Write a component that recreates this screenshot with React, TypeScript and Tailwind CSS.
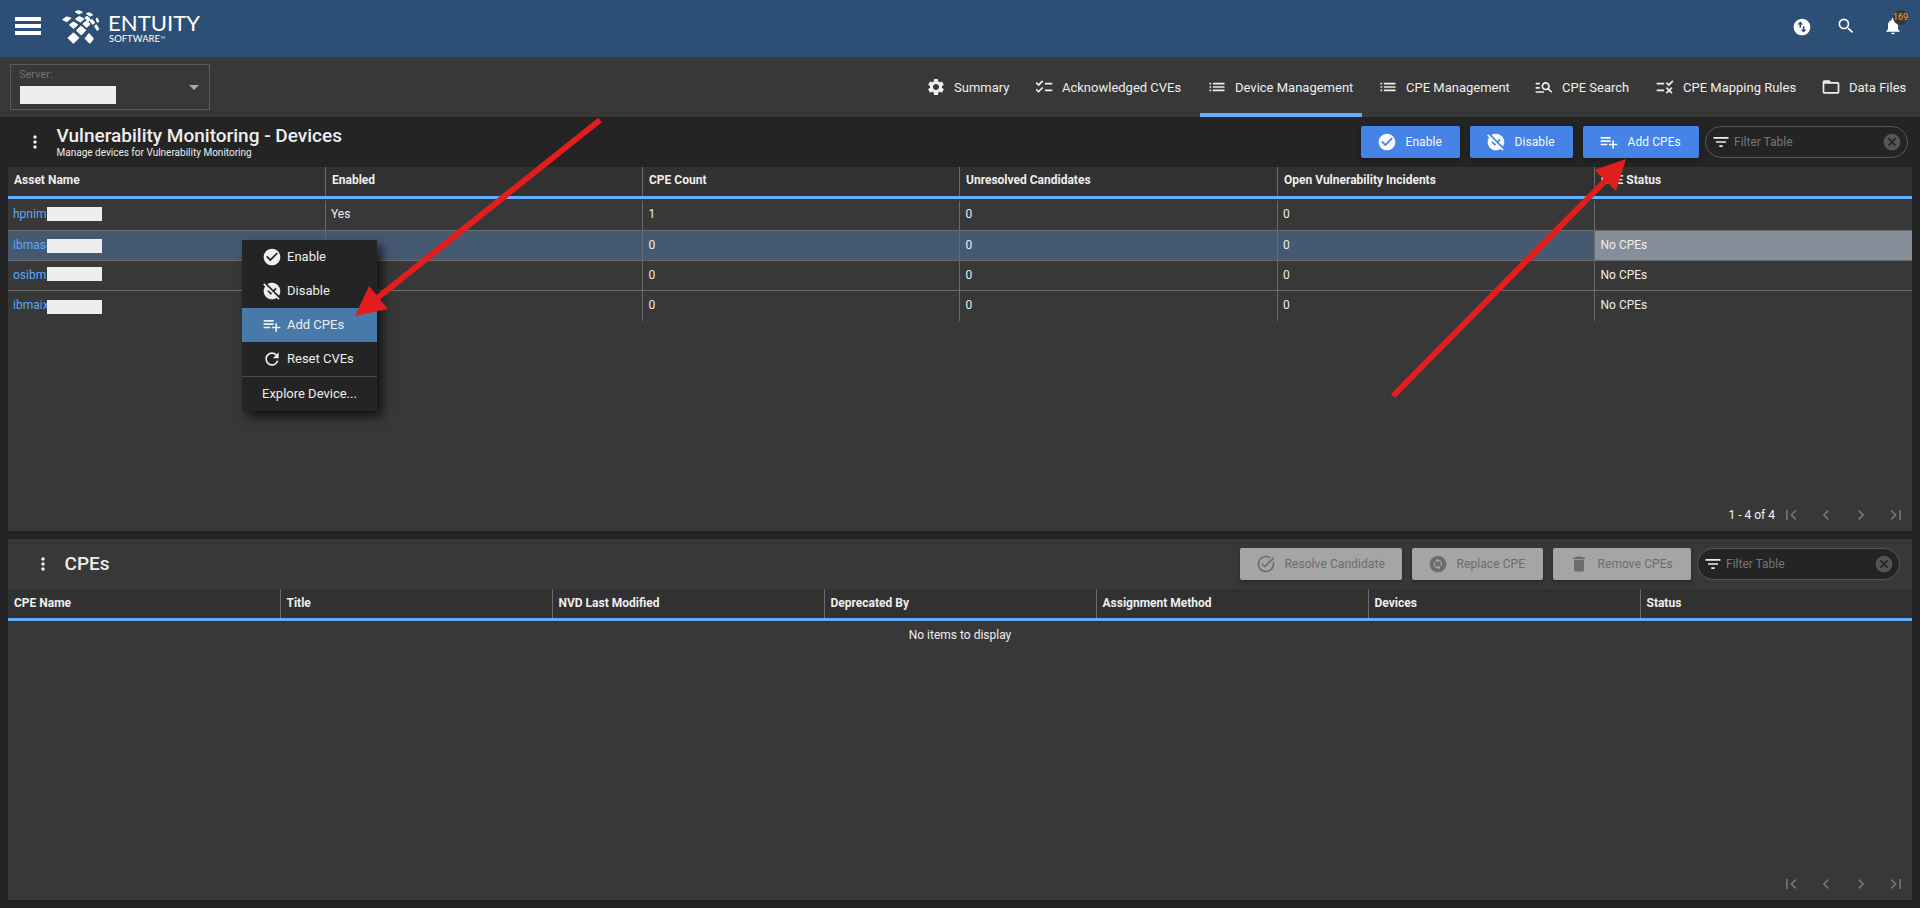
import React from "react";
import {
  MdSettings, MdChecklist, MdList, MdManageSearch, MdRule, MdFolderOpen, MdCheckCircle, MdUnpublished,
  MdRefresh, MdFilterList, MdCancel, MdTaskAlt, MdChangeCircle, MdDelete, MdFirstPage,
  MdLastPage, MdChevronLeft, MdChevronRight, MdNotifications, MdSearch, MdSwapVerticalCircle, MdMoreVert,
} from "react-icons/md";

type IconType = React.ComponentType<{ size?: number; className?: string }>;

function PlaylistAdd({ size = 20, className }: { size?: number; className?: string }) {
  return (
    <svg width={size} height={size} viewBox="0 0 24 24" fill="currentColor" className={className}>
      <path d="M14 10H2v2h12v-2zm0-4H2v2h12V6zm4 8v-4h-2v4h-4v2h4v4h2v-4h4v-2h-4zM2 16h8v-2H2v2z" />
    </svg>
  );
}

const tabs: { label: string; icon: IconType; width: string; active?: boolean }[] = [
  { label: "Summary", icon: MdSettings, width: "w-[108px]" },
  { label: "Acknowledged CVEs", icon: MdChecklist, width: "w-[173px]" },
  { label: "Device Management", icon: MdList, width: "w-[171px]", active: true },
  { label: "CPE Management", icon: MdList, width: "w-[156px]" },
  { label: "CPE Search", icon: MdManageSearch, width: "w-[121px]" },
  { label: "CPE Mapping Rules", icon: MdRule, width: "w-[166px]" },
  { label: "Data Files", icon: MdFolderOpen, width: "w-[106px]" },
];

const deviceColumns = ["Asset Name", "Enabled", "CPE Count", "Unresolved Candidates", "Open Vulnerability Incidents", "CPE Status"];
const devices = [
  { name: "hpnim", enabled: "Yes", count: "1", status: "", mask: "top-[6px]" },
  { name: "ibmas4", enabled: "", count: "0", status: "No CPEs", mask: "top-[8px]", selected: true },
  { name: "osibm", enabled: "", count: "0", status: "No CPEs", mask: "top-[6px]" },
  { name: "ibmaix", enabled: "", count: "0", status: "No CPEs", mask: "top-[9px]" },
];
const cpeColumns = ["CPE Name", "Title", "NVD Last Modified", "Deprecated By", "Assignment Method", "Devices", "Status"];
const deviceGrid = "grid grid-cols-[317px_317px_317px_318px_317px_318px]";

function Logo() {
  return (
    <svg width="140" height="40" viewBox="0 0 140 40" fill="#fff">
      <g stroke="#fff" strokeLinejoin="round" strokeWidth="1.6">
        <path d="M13.8 2.8l3-.8 3 1.2-2.6 1.4z" />
        <path d="M25 4.6l2.4-.4 2.6 1.6-1.8 1z" />
        <path d="M1.2 10.6l3.6-2.4 3.6 1-3.6 3z" />
        <path d="M14 10l3.4-2 4 2-3 2.6z" />
        <path d="M23.4 8.8l1.8-1 2.8 2.8-1.6 1.4z" />
        <path d="M8 16l3.4-2.6 3.8 2.2-3.6 3.4z" />
        <path d="M21.4 15l3-2.6 3 2.8-2.8 2.6z" />
        <path d="M34.4 10.2l.6-.8 1.4 3-.8.4z" />
        <path d="M28.6 12l1.400-1 2.200 2.800-1.600 1z" />
        <path d="M15 21.500l4-3.800 4.400 3.600-4.200 4.200z" />
        <path d="M33 17.400l1.200-1.200 2.200 3.800-1 1z" />
        <path d="M6.500 29l5-4.600 5 4.400-5 5z" />
        <path d="M23.500 29.500l3.500-4.500 4 4.800-3.200 4z" />
      </g>
      <text x="46" y="21.500" fontFamily="Lato" fontSize="22" textLength="92" lengthAdjust="spacingAndGlyphs">ENTUITY</text>
      <text x="47" y="33" fontFamily="Lato" fontSize="8.800" textLength="51" lengthAdjust="spacingAndGlyphs">SOFTWARE</text>
      <text x="98.500" y="29.500" fontFamily="Lato" fontSize="2.800">TM</text>
    </svg>
  );
}

function Button({ icon: Icon, label, width, disabled }: { icon: IconType; label: string; width: string; disabled?: boolean }) {
  return (
    <button
      className={`flex h-8 items-center whitespace-nowrap rounded-[2px] pl-4 text-[12px] tracking-[0.08px] shadow-[0_2px_4px_rgba(0,0,0,0.3)] ${width} ${
        disabled ? "bg-[#a5a5a5] text-[#6c6c6c]" : "bg-[#4583e6] text-[#f8f8f8]"
      }`}
    >
      <Icon size={20} className="mr-[8.5px] shrink-0" />
      {label}
    </button>
  );
}

function Filter() {
  return (
    <div className="ml-1.5 flex h-8 w-[203px] items-center rounded-full border border-[#555] bg-[#242424] pl-[5px] pr-[5px] text-[#777]">
      <MdFilterList size={20} className="mr-[3px] text-[#eee]" />
      <span className="flex-1 text-[12px]">Filter Table</span>
      <MdCancel size={20} className="text-[#555]" />
    </div>
  );
}

function Pager({ label }: { label?: string }) {
  return (
    <div className="flex h-8 items-center justify-end pr-[6px] text-[#757575]">
      <span className="mr-[6px] text-[12px] text-[#f4f4f4]">{label}</span>
      <div className="flex gap-[15px]">
        <MdFirstPage size={20} />
        <MdChevronLeft size={20} />
        <MdChevronRight size={20} />
        <MdLastPage size={20} />
      </div>
    </div>
  );
}

function MenuItem({ icon: Icon, label, active }: { icon: IconType; label: string; active?: boolean }) {
  return (
    <div className={`flex h-[34px] items-center pl-5 text-[13px] ${active ? "bg-[#4779a9]" : ""}`}>
      <Icon size={20} className="mr-[5px]" />
      {label}
    </div>
  );
}

export default function App() {
  return (
    <div className="relative flex h-[908px] w-[1920px] flex-col overflow-hidden bg-[#242424] font-['Roboto',sans-serif] text-[12px] text-[#eee]">
      <header className="flex h-[57px] shrink-0 items-center bg-[#2e4f75]">
        <div className="mb-[5px] ml-[15px] flex h-[18px] w-[26px] flex-col justify-between">
          <i className="h-1 bg-white" />
          <i className="h-1 bg-white" />
          <i className="h-1 bg-white" />
        </div>
        <div className="ml-[21px] h-10">
          <Logo />
        </div>
        <div className="ml-auto flex h-full w-[128px] pt-[17px] text-white">
          <MdSwapVerticalCircle size={20} className="mr-6" />
          <MdSearch size={20} className="-mt-px mr-[27px]" />
          <div className="relative">
            <MdNotifications size={20} className="-mt-px" />
            <span className="absolute -top-[7px] left-[10px] flex size-[15px] items-center justify-center rounded-full bg-[#383838] text-[9px] text-[#ffa726]">169</span>
          </div>
        </div>
      </header>

      <nav className="flex h-[60px] shrink-0 justify-between bg-[#383838]">
        <div className="ml-[10px] mt-[7px] flex h-[46px] w-[200px] justify-between border border-[#5a5a5a] pl-2">
          <div>
            <div className="mt-[2px] text-[11px] leading-4 text-[#707070]">Server:</div>
            <div className="ml-[1px] mt-[3px] h-[18px] w-24 bg-[#eee]" />
          </div>
          <i className="mr-[10px] mt-5 h-0 w-0 border-x-[5px] border-t-[5px] border-x-transparent border-t-[#aaa]" />
        </div>
        <div className="flex">
          {tabs.map(({ label, icon: Icon, width, active }) => (
            <div key={label} className={`flex ${width}`}>
              <div className={`relative flex flex-1 items-center whitespace-nowrap pl-[7px] text-[13px] ${active ? "mr-[9px]" : ""}`}>
                <Icon size={20} className="mr-2 shrink-0" />
                <span className="pt-px">{label}</span>
                {active && <i className="absolute inset-x-0 bottom-0 h-1 bg-[#61affe]" />}
              </div>
            </div>
          ))}
        </div>
      </nav>

      <section className="flex h-[414px] shrink-0 flex-col">
        <div className="flex h-[50px] shrink-0 items-center pr-3">
          <MdMoreVert size={20} className="ml-[24.5px]" />
          <div className="ml-[12px] -mt-px flex-1">
            <h1 className="text-[19px] font-medium leading-[22px]">Vulnerability Monitoring - Devices</h1>
            <p className="text-[10px] leading-[12px]">Manage devices for Vulnerability Monitoring</p>
          </div>
          <div className="flex">
            <div className="flex gap-[10px]">
              <Button icon={MdCheckCircle} label="Enable" width="w-[99px]" />
              <Button icon={MdUnpublished} label="Disable" width="w-[103px]" />
              <Button icon={PlaylistAdd} label="Add CPEs" width="w-[116px]" />
            </div>
            <Filter />
          </div>
        </div>
        <div className="mx-2 flex flex-1 flex-col bg-[#383838]">
          <div className={`${deviceGrid} h-8 shrink-0 border-b-[3px] border-[#61affe] bg-[#313131] font-bold`}>
            {deviceColumns.map((c, i) => (
              <div key={c} className={`pt-[5px] leading-4 ${i ? "border-l border-[#6b6b6b] pl-[6px]" : "pl-[6px]"}`}>{c}</div>
            ))}
          </div>
          <div className="pt-[2px]">
            {devices.map((d, r) => (
              <div
                key={d.name}
                className={`${deviceGrid} h-[30px] ${r ? "leading-[28px]" : "leading-[26px]"} ${r < 3 ? "border-b border-[#6b6b6b]" : ""} ${d.selected ? "bg-[#455a71]" : ""}`}
              >
                <div className="relative pl-[5px] text-[#5ba8f5]">
                  {d.name}
                  <i className={`absolute left-[39px] h-[14px] w-[55px] bg-[#eee] ${d.mask}`} />
                </div>
                <div className="border-l border-[#6b6b6b] pl-[5px]">{d.enabled}</div>
                <div className="border-l border-[#6b6b6b] pl-[5.5px]">{d.count}</div>
                <div className="border-l border-[#6b6b6b] pl-[5.5px]">0</div>
                <div className="border-l border-[#6b6b6b] pl-[5px]">0</div>
                <div className={`border-l border-[#6b6b6b] pl-[5.5px] ${d.selected ? "bg-[#858f99]" : ""}`}>{d.status}</div>
              </div>
            ))}
          </div>
          <div className="mt-auto">
            <Pager label="1 - 4 of 4" />
          </div>
        </div>
      </section>

      <section className="mx-2 mt-2 flex h-[361px] flex-col bg-[#383838]">
        <div className="flex h-[50px] shrink-0 items-center pr-3">
          <MdMoreVert size={20} className="ml-[24.5px]" />
          <h2 className="ml-[12px] flex-1 pt-px text-[19px] font-medium">CPEs</h2>
          <div className="flex">
            <div className="flex gap-[10px]">
              <Button icon={MdTaskAlt} label="Resolve Candidate" width="w-[162px]" disabled />
              <Button icon={MdChangeCircle} label="Replace CPE" width="w-[131px]" disabled />
              <Button icon={MdDelete} label="Remove CPEs" width="w-[138px]" disabled />
            </div>
            <Filter />
          </div>
        </div>
        <div className="grid h-8 shrink-0 grid-cols-7 border-b-[3px] border-[#61affe] bg-[#313131] font-bold">
          {cpeColumns.map((c, i) => (
            <div key={c} className={`pt-[6px] leading-4 ${i ? "border-l border-[#6b6b6b] pl-[5.5px]" : "pl-[6px]"}`}>{c}</div>
          ))}
        </div>
        <div className="pt-[6px] text-center leading-4">No items to display</div>
        <div className="mt-auto">
          <Pager />
        </div>
      </section>

      <div className="absolute left-[242px] top-[240px] w-[135px] bg-[#242424] shadow-[5px_5px_10px_rgba(0,0,0,0.7)]">
        <MenuItem icon={MdCheckCircle} label="Enable" />
        <MenuItem icon={MdUnpublished} label="Disable" />
        <MenuItem icon={PlaylistAdd} label="Add CPEs" active />
        <MenuItem icon={MdRefresh} label="Reset CVEs" />
        <div className="flex h-[35px] items-center border-t border-[#4c4c4c] pl-5 text-[13px]">Explore Device...</div>
      </div>

      <svg className="pointer-events-none absolute inset-0" width="1920" height="908" fill="#e11d1d" stroke="#e11d1d">
        <path d="M600 120L376 299M1393 396L1608 178" strokeWidth="6" />
        <path d="M355 316L369 286L388 309ZM1626 159L1594.500 170L1616 191Z" stroke="none" />
      </svg>
    </div>
  );
}
